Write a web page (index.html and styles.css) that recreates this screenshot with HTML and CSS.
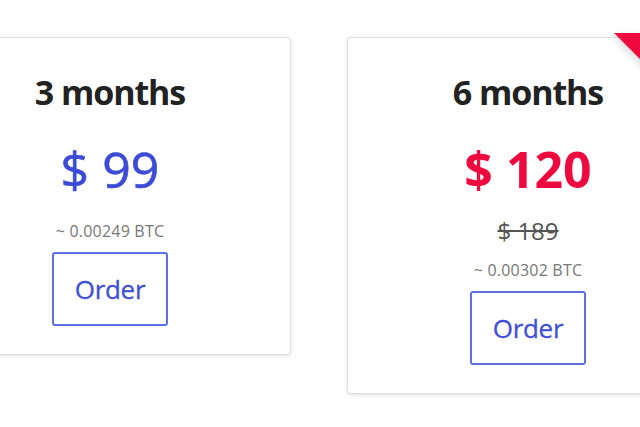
FILE: index.html
```html
<!DOCTYPE html>
<html lang="en">
<head>
<meta charset="utf-8">
<title>Pricing</title>
<link rel="stylesheet" href="styles.css">
</head>
<body>
<div class="plans">
  <div class="card">
    <div class="title">3 months</div>
    <div class="price price-blue">$ 99</div>
    <div class="btc">~ 0.00249 BTC</div>
    <a class="order" href="#">Order</a>
  </div>
  <div class="card">
    <div class="ribbon-shadow"><div class="ribbon"></div></div>
    <div class="title">6 months</div>
    <div class="price price-red">$ 120</div>
    <div class="old">$ 189</div>
    <div class="btc">~ 0.00302 BTC</div>
    <a class="order" href="#">Order</a>
  </div>
</div>
</body>
</html>
```
FILE: styles.css
```css
html, body {
  margin: 0;
  padding: 0;
  background: #ffffff;
  overflow: hidden;
}
body {
  font-family: "Open Sans", "Noto Sans", sans-serif;
  width: 640px;
  height: 427px;
}
.plans {
  display: flex;
  align-items: flex-start;
  gap: 56px;
  margin-left: -71px;
  padding-top: 37px;
}
.card {
  position: relative;
  flex: 0 0 362px;
  box-sizing: border-box;
  border: 1px solid #e0e0e0;
  border-radius: 4px;
  box-shadow: 0 1px 4px rgba(0, 0, 0, 0.12);
  background: #fff;
  padding: 34px 0 28px;
  display: flex;
  flex-direction: column;
  align-items: center;
  text-align: center;
}
.title {
  font-size: 34px;
  line-height: 40px;
  font-weight: 700;
  letter-spacing: -1.1px;
  color: #222;
  margin-bottom: 29px;
}
.price {
  font-size: 50px;
  line-height: 56px;
  margin-bottom: 19px;
}
.price-blue {
  color: #3b4bd6;
  font-weight: 500;
  -webkit-text-stroke: 0.6px #3b4bd6;
}
.price-red {
  color: #ee0a3f;
  font-weight: 700;
}
.old {
  font-size: 24px;
  line-height: 30px;
  color: #555;
  text-decoration: line-through;
  margin-bottom: 9px;
}
.btc {
  font-size: 16px;
  line-height: 30px;
  color: #777;
  letter-spacing: 0.2px;
}
.order {
  margin-top: 6px;
  box-sizing: border-box;
  width: 116px;
  height: 74px;
  border: 2px solid #6070e2;
  border-radius: 3px;
  display: flex;
  align-items: center;
  justify-content: center;
  font-size: 26px;
  font-weight: 500;
  -webkit-text-stroke: 0.3px #3f4fd8;
  color: #3f4fd8;
  text-decoration: none;
  letter-spacing: -0.3px;
}
.ribbon-shadow {
  position: absolute;
  top: -5px;
  right: -5px;
  width: 130px;
  height: 130px;
  filter: drop-shadow(0 3px 4px rgba(0, 0, 0, 0.18));
}
.ribbon {
  width: 130px;
  height: 130px;
  background: #ef0a3e;
  clip-path: polygon(31px 0, 87px 0, 130px 43px, 130px 99px);
}
```
